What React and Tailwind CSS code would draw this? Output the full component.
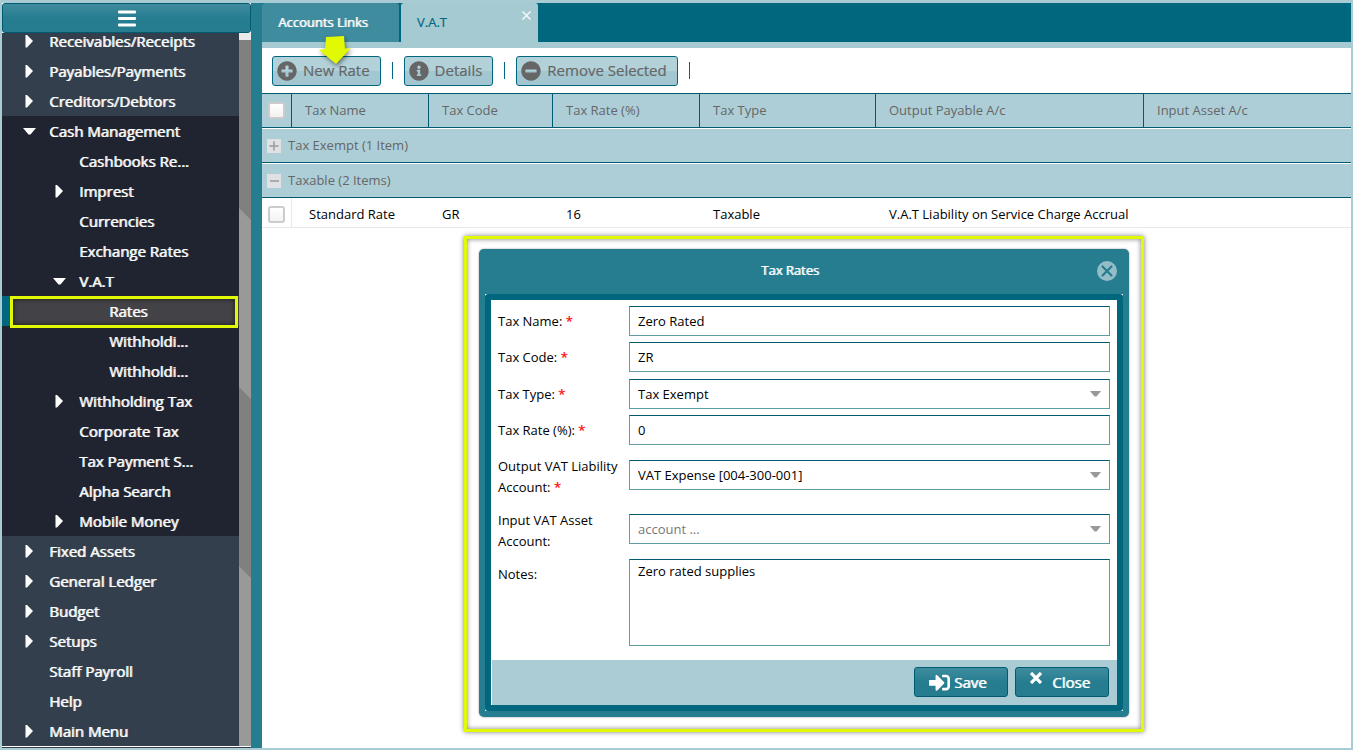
import React, { useState } from 'react';
import { FaInfoCircle, FaMinusCircle, FaPlusCircle, FaSignInAlt } from 'react-icons/fa';

const menuTop = [
  { label: 'Receivables/Receipts', arrow: 'right' },
  { label: 'Payables/Payments', arrow: 'right' },
  { label: 'Creditors/Debtors', arrow: 'right' },
];

const menuOpen = [
  { label: 'Cash Management', arrow: 'down' },
  { label: 'Cashbooks Re...', level: 1 },
  { label: 'Imprest', level: 1, arrow: 'right' },
  { label: 'Currencies', level: 1 },
  { label: 'Exchange Rates', level: 1 },
  { label: 'V.A.T', level: 1, arrow: 'down' },
  { label: 'Rates', level: 2, active: true },
  { label: 'Withholdi...', level: 2 },
  { label: 'Withholdi...', level: 2 },
  { label: 'Withholding Tax', level: 1, arrow: 'right' },
  { label: 'Corporate Tax', level: 1 },
  { label: 'Tax Payment S...', level: 1 },
  { label: 'Alpha Search', level: 1 },
  { label: 'Mobile Money', level: 1, arrow: 'right' },
];

const menuBottom = [
  { label: 'Fixed Assets', arrow: 'right' },
  { label: 'General Ledger', arrow: 'right' },
  { label: 'Budget', arrow: 'right' },
  { label: 'Setups', arrow: 'right' },
  { label: 'Staff Payroll' },
  { label: 'Help' },
  { label: 'Main Menu', arrow: 'right' },
];

const indents = ['pl-[21px]', 'pl-[51px]', 'pl-[81px]'];

const columns = ['Tax Name', 'Tax Code', 'Tax Rate (%)', 'Tax Type', 'Output Payable A/c', 'Input Asset A/c'];

// regular weight thickened sideways, keeps the narrow letter widths
const strong = 'font-normal text-white [text-shadow:1px_0_0_rgba(255,255,255,0.8)]';

const MenuItem = ({ label, level = 0, arrow, active }) => (
  <li className={active ? 'relative bg-[#424247]' : 'relative'}>
    <a href="#" className={`flex h-[30px] items-center gap-[13px] whitespace-nowrap ${indents[level]}`}>
      <svg viewBox="0 0 13 13" className="h-[13px] w-[13px] shrink-0" fill="currentColor">
        {arrow === 'right' && <path d="M2.5 0 L4 0 L10 6 L4 12.5 L2.5 12.5 Z" />}
        {arrow === 'down' && <path d="M0 3 H13 L7.5 9.5 H5.5 Z" />}
      </svg>
      {label}
    </a>
    {active && (
      <>
        <span className="absolute inset-y-0 left-0 w-2 bg-[#00677e]"></span>
        <span className="absolute top-0 right-px -bottom-0.5 left-2 border-3 border-[#e1fa03] shadow-[inset_0_0_5px_rgba(0,0,0,0.6)]"></span>
      </>
    )}
  </li>
);

const Sidebar = () => (
  <nav className="flex w-[249px] shrink-0 flex-col border-b border-[#333f4c] pb-px">
    <button
      type="button"
      aria-label="Toggle menu"
      className="flex h-[30px] shrink-0 items-center justify-center rounded-[3px] border border-[#005a70] bg-linear-to-b from-[#3f8c9e] via-[#267d90] to-[#267d90]"
    >
      <svg viewBox="0 0 18 17" className="h-[17px] w-[18px]" fill="#fff">
        <rect y="0.5" width="18" height="3" rx="1" />
        <rect y="7" width="18" height="3" rx="1" />
        <rect y="13.5" width="18" height="3" rx="1" />
      </svg>
    </button>
    <div className="flex min-h-0 flex-1 overflow-hidden bg-[#333f4c]">
      <div className={`-mt-[7px] flex-1 text-[15px] ${strong}`}>
        <ul>{menuTop.map((item) => <MenuItem key={item.label} {...item} />)}</ul>
        <ul className="bg-[#1f2430]">
          {menuOpen.map((item, i) => <MenuItem key={i} {...item} />)}
        </ul>
        <ul>{menuBottom.map((item) => <MenuItem key={item.label} {...item} />)}</ul>
      </div>
      {/* Scrollbar */}
      <div className="w-3 overflow-hidden bg-[#808080]">
        <svg viewBox="0 0 12 713" className="h-[713px] w-3">
          <rect width="12" height="7" fill="#e9e9e9" />
          <path d="M0 175 L12 187 V366 L0 354 Z M0 533 L12 545 V713 H0 Z" fill="#999" />
        </svg>
      </div>
    </div>
  </nav>
);

const Tabs = () => (
  <div className="flex h-[45px] shrink-0 gap-0.5 border-b-6 border-[#a6cad2] bg-[#00677e] text-[13px]">
    <button type="button" className={`w-[137px] rounded-t-[3px] bg-[#3f8c9e] pl-4 text-left ${strong}`}>
      Accounts Links
    </button>
    <div className="relative flex w-[137px] rounded-t-[3px] bg-[#a6cad2]">
      <button type="button" className="flex-1 pl-4 text-left text-[#00677e] [-webkit-text-stroke:0.2px_#00677e]">
        V.A.T
      </button>
      <button type="button" aria-label="Close tab" className="absolute top-2 right-[7px]">
        <svg viewBox="0 0 9 9" className="h-[9px] w-[9px]" stroke="#f4f8f9" strokeWidth="1.5">
          <path d="M0.5 0.5 L8.5 8.5 M8.5 0.5 L0.5 8.5" />
        </svg>
      </button>
    </div>
  </div>
);

const ToolButton = ({ icon: Icon, children }) => (
  <>
    <button
      type="button"
      className="flex h-[30px] items-center gap-1.5 rounded-[3px] border border-[#00677e] bg-linear-to-b from-[#b3d1d9] from-50% to-[#a3c7d0] to-50% pr-2.5 pl-1 text-[15px] text-[#666] [-webkit-text-stroke:0.2px_#666]"
    >
      <Icon className="h-5 w-5" />
      {children}
    </button>
    <span className="h-[17px] w-px bg-[#00677e]"></span>
  </>
);

const Toolbar = () => (
  <div className="relative flex h-[45px] shrink-0 items-center gap-[11px] pl-2.5">
    <ToolButton icon={FaPlusCircle}>New Rate</ToolButton>
    <ToolButton icon={FaInfoCircle}>Details</ToolButton>
    <ToolButton icon={FaMinusCircle}>Remove Selected</ToolButton>
    <svg viewBox="0 0 34 30" className="absolute -top-3 left-[56px] h-[30px] w-[34px] drop-shadow-[1px_2px_2px_rgba(0,0,0,0.5)]">
      <path d="M8 1 L26 0 L27 13 L33 12 L18 28 L1 14 L7 13 Z" fill="#e1fa03" />
    </svg>
  </div>
);

const Check = ({ label }) => (
  <input
    type="checkbox"
    aria-label={label}
    className="mx-auto block h-[17px] w-[17px] appearance-none rounded-[3px] border-2 border-[#ccc] bg-linear-to-b from-white to-[#f2f2f2]"
  />
);

const GroupRow = ({ open, children }) => (
  <tr className="h-[35px] bg-[#adced7] text-[#666]">
    <td colSpan={7} className="p-0 pl-[5px]">
      <div className="flex items-center gap-[7px]">
        <svg viewBox="0 0 14 14" className="h-3.5 w-3.5">
          <rect width="14" height="14" fill="#dfe1e5" />
          <path d={open ? 'M3 7 H12' : 'M2.5 7 H11.5 M7 2.5 V11.5'} stroke="#999" strokeWidth="1.5" />
        </svg>
        {children}
      </div>
    </td>
  </tr>
);

const RatesTable = () => (
  <table className="w-full table-fixed border-separate border-spacing-0 text-[13px] [&_td]:whitespace-nowrap">
    <colgroup>
      <col className="w-[30px]" />
      <col className="w-[137px]" />
      <col className="w-[124px]" />
      <col className="w-[147px]" />
      <col className="w-[176px]" />
      <col className="w-[268px]" />
      <col />
    </colgroup>
    <thead>
      <tr className="h-[35px] bg-[#adced7] text-left text-[#666] [&>th]:border-y [&>th]:border-r [&>th]:border-[#005a70] [&>th:last-child]:border-r-0">
        <th className="p-0"><Check label="Select all" /></th>
        {columns.map((name) => (
          <th key={name} className="p-0 pl-[13px] font-normal">{name}</th>
        ))}
      </tr>
    </thead>
    <tbody className="[&>tr:not(:last-child)>td]:border-y [&>tr:not(:last-child)>td]:border-t-white [&>tr:not(:last-child)>td]:border-b-[#005a70]">
      <GroupRow>Tax Exempt (1 Item)</GroupRow>
      <GroupRow open>Taxable (2 Items)</GroupRow>
      <tr className="h-[30px] text-black [&>td]:border-b [&>td]:border-[#e8e8e8] [&>td]:pt-1">
        <td className="border-r p-0"><Check label="Select Standard Rate" /></td>
        <td className="p-0 pl-[17px]">Standard Rate</td>
        <td className="p-0 pl-[13px]">GR</td>
        <td className="p-0 pl-[13px]">16</td>
        <td className="p-0 pl-[13px]">Taxable</td>
        <td className="p-0 pl-[13px]">V.A.T Liability on Service Charge Accrual</td>
        <td></td>
      </tr>
    </tbody>
  </table>
);

const fieldClass =
  'block h-[30px] w-full appearance-none rounded-none border border-[#5f9ea0] border-t-[#005a70] bg-white px-2 text-[13px] outline-none';

const Field = ({ id, label, required, className = 'h-[30px] items-center', children }) => (
  <div className={`flex ${className}`}>
    <label htmlFor={id} className="w-[131px] shrink-0 pr-2 leading-[21px]">
      {label}
      {required && <span className="text-[#f00] [-webkit-text-stroke:0.2px_#f00]"> *</span>}
    </label>
    <div className="relative flex-1">{children}</div>
  </div>
);

const Caret = () => (
  <svg viewBox="0 0 11 6" className="pointer-events-none absolute top-3 right-[9px] h-1.5 w-[11px]">
    <path d="M0 0 H11 L6.5 5.5 H4.5 Z" fill="#999" />
  </svg>
);

const actionClass =
  'flex h-[30px] w-[94px] items-center rounded-[3px] border border-[#005a70] bg-linear-to-b from-[#3f8c9e] via-[#267d90] to-[#267d90] pl-3.5 text-[15px]';

const TaxRateDialog = () => {
  const [form, setForm] = useState({
    name: 'Zero Rated',
    code: 'ZR',
    rate: '0',
    notes: 'Zero rated supplies',
  });
  const update = (key) => (e) => setForm({ ...form, [key]: e.target.value });

  return (
    <div className="absolute top-[233px] left-[202px] w-[680px] border-3 border-[#e1fa03] px-3 pt-2.5 pb-3 shadow-[0_0_5px_rgba(0,0,0,0.5),inset_0_0_5px_rgba(0,0,0,0.5)]">
      <div role="dialog" aria-label="Tax Rates" className="rounded-[5px] bg-[#267d90] px-1.5 pb-1.5 text-[13px] text-black shadow-[0_0_2px_#888]">
        <div className="relative flex h-[45px] items-center justify-center">
          <h2 className={`pr-7 pb-0.5 ${strong}`}>Tax Rates</h2>
          <button type="button" aria-label="Close dialog" className="absolute top-3 right-1.5">
            <svg viewBox="0 0 20 20" className="h-5 w-5">
              <circle cx="10" cy="10" r="10" fill="#93bec8" />
              <path d="M5.5 5.5 L14.5 14.5 M14.5 5.5 L5.5 14.5" stroke="#267d90" strokeWidth="2.2" strokeLinecap="round" />
            </svg>
          </button>
        </div>
        <div className="bg-white">
          <div className="rounded-[3px] border-6 border-[#00677e]">
            <form className="flex flex-col gap-1.5 pt-1.5 pr-[7px] pb-3.5 pl-[7px]">
              <Field id="name" label="Tax Name:" required>
                <input id="name" type="text" className={fieldClass} value={form.name} onChange={update('name')} />
              </Field>
              <Field id="code" label="Tax Code:" required>
                <input id="code" type="text" className={fieldClass} value={form.code} onChange={update('code')} />
              </Field>
              <Field id="type" label="Tax Type:" required className="h-[31px] items-end [&>label]:pb-1">
                <select id="type" className={`${fieldClass} pt-0.5`}>
                  <option>Tax Exempt</option>
                  <option>Taxable</option>
                </select>
                <Caret />
              </Field>
              <Field id="rate" label="Tax Rate (%):" required>
                <input id="rate" type="text" className={fieldClass} value={form.rate} onChange={update('rate')} />
              </Field>
              <Field id="output" label="Output VAT Liability Account:" required className="h-12 items-center [&>label]:pt-1">
                <select id="output" className={`${fieldClass} pt-0.5`}>
                  <option>VAT Expense [004-300-001]</option>
                </select>
                <Caret />
              </Field>
              <Field id="input" label="Input VAT Asset Account:" className="h-12 items-center [&>label]:pt-1">
                <select id="input" className={`${fieldClass} pt-0.5 text-[#777]`}>
                  <option>account ...</option>
                </select>
                <Caret />
              </Field>
              <Field id="notes" label="Notes:" className="items-start [&>label]:pt-[5px]">
                <textarea
                  id="notes"
                  className="block h-[87px] w-full resize-none border border-[#5f9ea0] border-t-[#005a70] bg-white px-2 py-px text-[13px] leading-5 outline-none"
                  value={form.notes}
                  onChange={update('notes')}
                />
              </Field>
            </form>
            <div className="ml-px flex h-[45px] items-start justify-end gap-[7px] bg-[#abccd5] pt-[7px] pr-2">
              <button type="button" className={`${actionClass} ${strong}`}>
                <FaSignInAlt className="mr-1 h-[21px] w-[21px]" />
                Save
              </button>
              <button type="button" className={`${actionClass} ${strong}`}>
                <svg viewBox="0 0 12 12" className="mr-2.5 mb-2 h-3 w-3" stroke="#fff" strokeWidth="3.2">
                  <path d="M1 1 L11 11 M11 1 L1 11" />
                </svg>
                Close
              </button>
            </div>
          </div>
        </div>
      </div>
    </div>
  );
};

const App = () => (
  <div className="flex h-screen overflow-hidden border-2 border-t-3 border-[#a9ccd4] bg-white font-['Open_Sans',sans-serif]">
    <Sidebar />
    <div className="w-[11px] shrink-0 bg-[#267d90]"></div>
    <main className="relative flex min-w-0 flex-1 flex-col">
      <Tabs />
      <Toolbar />
      <RatesTable />
      <TaxRateDialog />
    </main>
  </div>
);

export default App;
